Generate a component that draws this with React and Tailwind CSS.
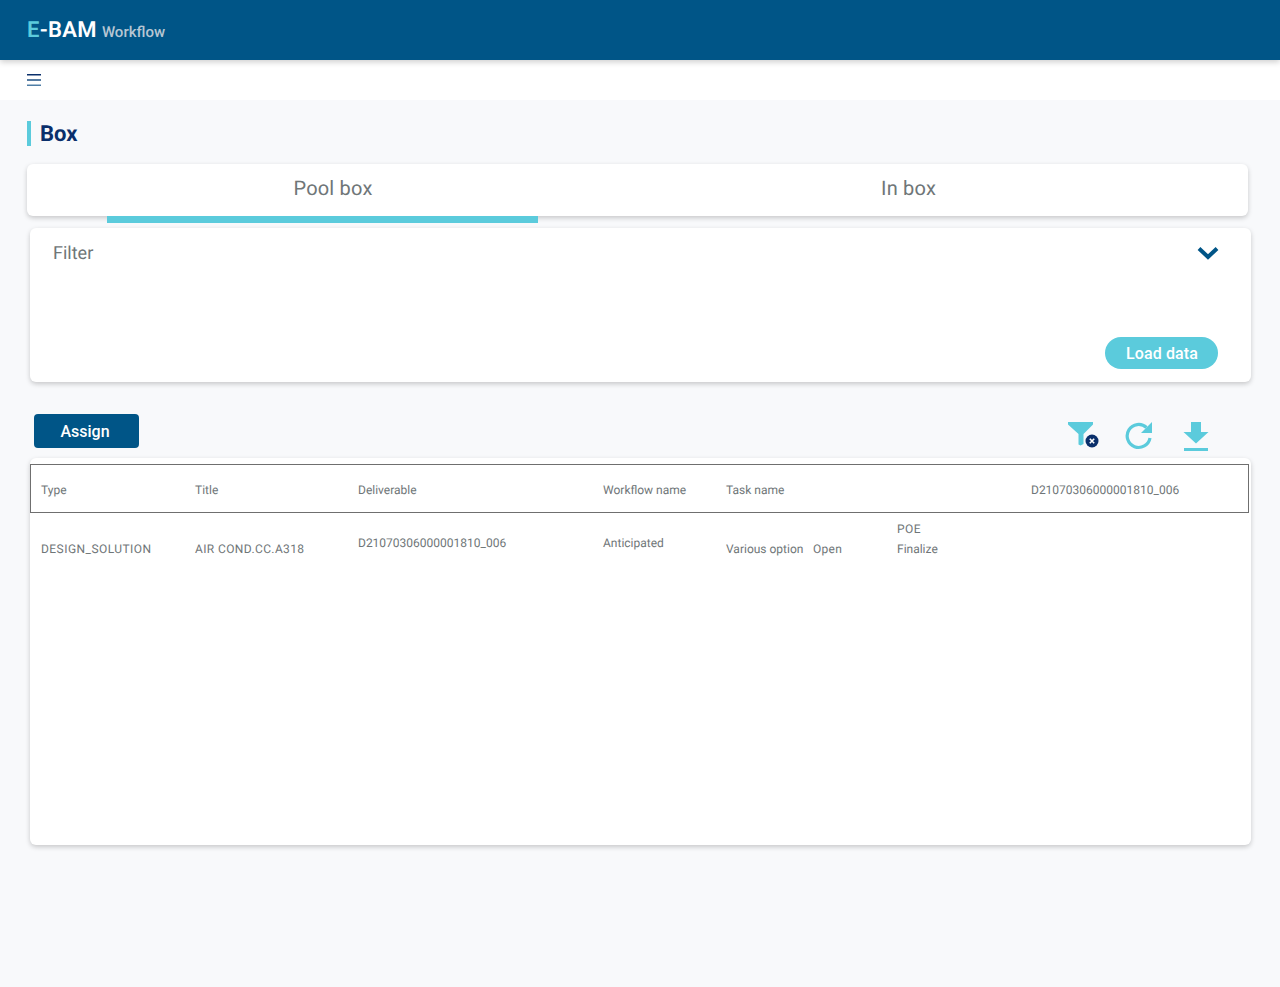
import React from 'react';

const FONT = "font-['Roboto',sans-serif]";

function FilterClearIcon() {
  return (
    <svg width="34" height="30" viewBox="0 0 34 30" className="block">
      <path d="M1 0h25v2.500L16.500 12v10l-3 1.500-2-1V12L1 2.500z" fill="#5bcbdc" />
      <circle cx="25" cy="19" r="6.500" fill="#0a2f6b" />
      <path d="M22.800 16.800l4.400 4.400M27.200 16.800l-4.400 4.400" stroke="#fff" strokeWidth="1.600" />
    </svg>
  );
}

function RefreshIcon() {
  return (
    <svg width="28" height="28" viewBox="0 0 28 28" className="block">
      <path d="M22.500 5.500A11.500 11.500 0 1 0 26 16" fill="none" stroke="#5bcbdc" strokeWidth="3.200" />
      <path d="M28 0V11H17z" fill="#5bcbdc" />
    </svg>
  );
}

function DownloadIcon() {
  return (
    <svg width="26" height="30" viewBox="0 0 26 30" className="block">
      <path d="M8 0h10v10h7.500L13 21.500 .5 10H8z" fill="#5bcbdc" />
      <rect x="1" y="26" width="24" height="3" fill="#5bcbdc" />
    </svg>
  );
}

export default function App() {
  return (
    <div className={`min-h-[987px] bg-[#f8f9fb] [text-rendering:geometricPrecision] ${FONT}`}>
      <header className="relative z-10 h-[60px] bg-[#005587] flex items-center pl-[27px] shadow-[0_2px_6px_rgba(0,0,0,0.2)]">
        <span className="mt-[2px] text-[22px] font-semibold text-white leading-none tracking-[0.3px]">
          <span className="text-[#5bcbdc]">E</span>-BAM
        </span>
        <span className="ml-[5px] mt-[4px] text-[15px] font-medium text-[#b7c6d3] leading-none">Workflow</span>
      </header>

      <div className="h-[40px] bg-white flex items-center pl-[27px]">
        <svg width="14" height="12" viewBox="0 0 14 12" className="block">
          <path d="M0 .75h14" stroke="#0a2f6b" strokeWidth="1.500" />
          <path d="M0 6h14" stroke="#1d4f83" strokeWidth="1.500" />
          <path d="M0 11.250h14" stroke="#4f7ea6" strokeWidth="1.500" />
        </svg>
      </div>

      <main className="pt-[21px] pl-[27px] pr-[29px]">
        <div className="flex items-center h-[25px] border-l-4 border-[#5bcbdc] pl-[9px] pt-[2px] text-[22px] font-bold text-[#0a2f6b]">
          Box
        </div>

        <div className="relative mt-[18px] h-[52px] bg-white rounded-md shadow-[0_2px_5px_rgba(0,0,0,0.2)] w-[1221px] flex text-[20px] tracking-[0.2px] text-[#6f7678]">
          <div className="w-[612px] text-center pt-[9px]">Pool box</div>
          <div className="flex-1 pt-[9px] pl-[242px]">In box</div>
          <div className="absolute left-[80px] top-[52px] w-[431px] h-[7px] bg-[#5bcbdc]" />
        </div>

        <section className="relative mt-[12px] ml-[3px] h-[154px] w-[1221px] bg-white rounded-md shadow-[0_2px_5px_rgba(0,0,0,0.2)] px-[23px] pt-[14px]">
          <div className="flex items-center justify-between text-[18px] text-[#6f7678] leading-[22px]">
            <span className="pt-[1px]">Filter</span>
            <svg width="22" height="14" viewBox="0 0 22 14" className="mr-[9px] mb-[2px]">
              <path d="M2 2.500l9 8.500 9-8.500" fill="none" stroke="#005587" strokeWidth="4" />
            </svg>
          </div>
          <div className="flex justify-end mt-[72px] pr-[10px]">
            <button className="w-[113px] h-[32px] rounded-full bg-[#5bcbdc] text-white text-[16px] font-medium tracking-[0.1px] pt-[1px] pl-[1px]">
              Load data
            </button>
          </div>
        </section>

        <div className="mt-[32px] ml-[7px] flex items-start justify-between h-[34px] w-[1175px]">
          <button className="w-[105px] h-[34px] rounded-[4px] bg-[#005587] text-white text-[16px] font-medium pr-[3px] pt-[2px]">Assign</button>
          <div className="flex items-start pt-[8px]">
            <FilterClearIcon />
            <div className="ml-[23px]"><RefreshIcon /></div>
            <div className="ml-[31px]"><DownloadIcon /></div>
          </div>
        </div>

        <section className="mt-[10px] ml-[3px] h-[387px] w-[1221px] bg-white rounded-md shadow-[0_2px_5px_rgba(0,0,0,0.2)] pt-[6px] text-[12px] text-[#6f7678]">
          <div className="flex items-center h-[49px] w-[1219px] border border-[#6f6f6f] pl-[10px] pt-[2px]">
            <div className="w-[154px]">Type</div>
            <div className="w-[163px]">Title</div>
            <div className="w-[245px]">Deliverable</div>
            <div className="w-[123px]">Workflow name</div>
            <div className="w-[305px]">Task name</div>
            <div>D21070306000001810_006</div>
          </div>
          <div className="flex pl-[11px] pt-[8px]">
            <div className="w-[154px] pt-[21px] leading-[14px] tracking-[0.45px]">DESIGN_SOLUTION</div>
            <div className="w-[163px] pt-[21px] leading-[14px] tracking-[0.38px]">AIR COND.CC.A318</div>
            <div className="w-[245px] pt-[15px] leading-[14px]">D21070306000001810_006</div>
            <div className="w-[123px] pt-[15px] leading-[14px]">Anticipated</div>
            <div className="w-[87px] pt-[21px] leading-[14px]">Various option</div>
            <div className="w-[84px] pt-[21px] leading-[14px] tracking-[0.3px]">Open</div>
            <div className="pt-[1px] leading-[14px] flex flex-col gap-[6px]">
              <span className="tracking-[0.5px]">POE</span>
              <span>Finalize</span>
            </div>
          </div>
        </section>
      </main>
    </div>
  );
}
